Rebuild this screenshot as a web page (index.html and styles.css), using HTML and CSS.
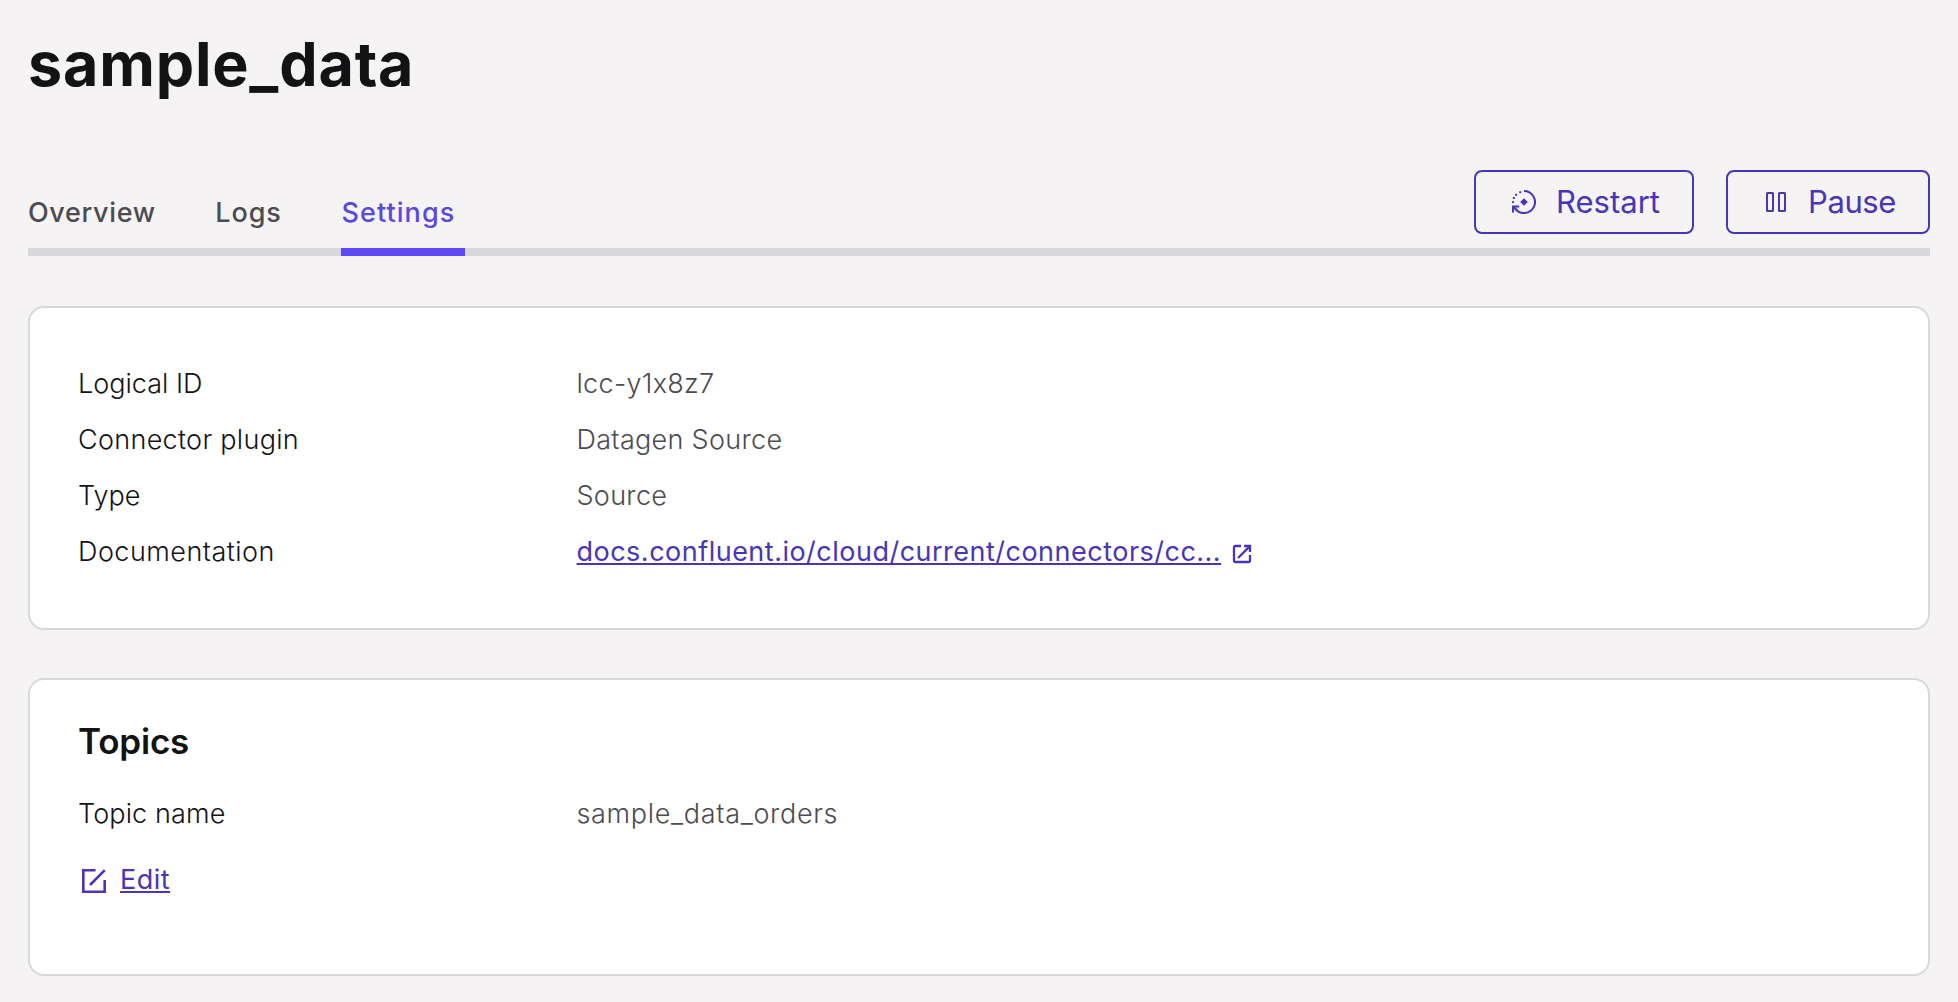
FILE: index.html
```
<!DOCTYPE html>
<html lang="en">
<head>
<meta charset="utf-8">
<title>sample_data</title>
<link rel="stylesheet" href="styles.css">
</head>
<body>
<main class="page">
  <h1 class="title">sample_data</h1>

  <div class="toolbar">
    <nav class="tabs">
      <a class="tab tab-overview">Overview</a>
      <a class="tab tab-logs">Logs</a>
      <a class="tab tab-settings active">Settings</a>
    </nav>
    <div class="actions">
      <button class="button">
        <svg class="icon" viewBox="0 0 24 24" width="24" height="24" fill="none" stroke="currentColor" stroke-width="2">
          <path d="M12 1A11 11 0 1 1 3.2 18.6"/>
          <path d="M1 22.5V16.4H7.2M1.2 16.6L5.4 20.8"/>
          <path d="M12 8.2L15.8 12L12 15.8L8.2 12Z" fill="currentColor" stroke="none"/>
          <path d="M7.2 1.2h2v2h-2zM3.2 3.8h2v2h-2zM.8 7h2v2h-2zM0 11.2h2v1.8h-2z" fill="currentColor" stroke="none"/>
        </svg>
        <span>Restart</span>
      </button>
      <button class="button button-pause">
        <svg class="icon" viewBox="0 0 24 24" width="24" height="24" fill="none" stroke="currentColor" stroke-width="2">
          <rect x="3" y="3" width="6" height="18" rx=".6"/>
          <rect x="15" y="3" width="6" height="18" rx=".6"/>
        </svg>
        <span>Pause</span>
      </button>
    </div>
  </div>

  <section class="card">
    <dl class="details">
      <dt class="t-flat">Logical ID</dt><dd>lcc-y1x8z7</dd>
      <dt>Connector plugin</dt><dd>Datagen Source</dd>
      <dt class="t-flat">Type</dt><dd>Source</dd>
      <dt class="t-mid">Documentation</dt>
      <dd class="doc">
        <a class="link">docs.confluent.io/cloud/current/connectors/cc...</a>
        <svg class="external" viewBox="0 0 20 20" width="20" height="20" fill="none" stroke="currentColor" stroke-width="2.3">
          <path d="M9 2H3.2Q2 2 2 3.2V16.8Q2 18 3.2 18H16.8Q18 18 18 16.8V11"/>
          <path d="M6 14L17.4 2.6M12 2H18V8"/>
        </svg>
      </dd>
    </dl>
  </section>

  <section class="card card-topics">
    <h2 class="heading">Topics</h2>
    <dl class="details">
      <dt class="t-name">Topic name</dt><dd class="t-wide">sample_data_orders</dd>
    </dl>
    <div class="edit">
      <svg class="icon" viewBox="0 0 24 24" width="24" height="24" fill="none" stroke="currentColor" stroke-width="2.6">
        <path d="M13.5 1.3H1.3V22.7H22.7V11"/>
        <path d="M8 16L22.8 1.2"/>
      </svg>
      <a class="link">Edit</a>
    </div>
  </section>
</main>
</body>
</html>
```
FILE: styles.css
```
* {
  box-sizing: border-box;
}

body {
  margin: 0;
  background: #f5f3f4;
  color: #131316;
  font: 300 27px/56px Inter, "Liberation Sans", sans-serif;
  font-feature-settings: "calt" 0;
}

.page {
  padding: 24px 28px 26px;
}

.title {
  margin: 0;
  font-size: 61px;
  line-height: 80px;
  font-weight: 700;
  letter-spacing: 0.8px;
}

.toolbar {
  display: flex;
  justify-content: space-between;
  height: 86px;
  margin: 66px 0 50px;
  background: linear-gradient(#d8d7db, #d8d7db) bottom / 100% 8px no-repeat;
}

.tabs {
  display: flex;
  align-items: flex-end;
  gap: 49.6px;
}

.tab {
  height: 64px;
  padding: 1px 10px 0 0;
  border-bottom: 8px solid transparent;
  color: #4c4b52;
  font-weight: 500;
  line-height: 40px;
}

.tab-overview {
  letter-spacing: 0.65px;
}

.tab-logs {
  letter-spacing: 0.9px;
}

.tab-settings {
  width: 124px;
  letter-spacing: 1.1px;
}

.tab.active {
  color: #5b48e0;
  border-color: #5d48f3;
}

.actions {
  display: flex;
  gap: 32px;
}

.button {
  display: flex;
  align-items: center;
  gap: 20px;
  width: 220px;
  height: 64px;
  padding: 0 0 0 36px;
  border: 2px solid #4835b8;
  border-radius: 8px;
  background: none;
  color: #4835b8;
  font: 400 31px/60px Inter, "Liberation Sans", sans-serif;
}

.button-pause {
  width: 204px;
  letter-spacing: -0.4px;
}

.icon,
.external {
  flex: none;
}

.card {
  padding: 48px;
  border: 2px solid #d8d8db;
  border-radius: 16px;
  background: #fff;
}

.card-topics {
  margin-top: 48px;
  padding: 39px 48px 66px;
}

.details {
  display: grid;
  grid-template-columns: 498.5px 1fr;
  margin: 0;
  letter-spacing: 0.3px;
}

.details dd {
  margin: 0;
  color: #4c4b52;
}

.details .t-flat {
  letter-spacing: 0;
}

.details .t-name {
  letter-spacing: 0.12px;
}

.details .t-mid {
  letter-spacing: 0.47px;
}

.details .t-wide {
  letter-spacing: 0.67px;
}

.details .doc {
  display: flex;
  align-items: center;
  gap: 11px;
  color: #4835b8;
}

.external {
  margin-top: 3px;
}

.link {
  color: #4835b8;
  font-weight: 400;
  letter-spacing: 0.49px;
  text-decoration: underline;
  text-decoration-thickness: 2px;
  text-underline-offset: 2px;
  text-decoration-skip-ink: none;
}

.heading {
  margin: 0 0 23px;
  font-size: 35px;
  line-height: 44px;
  font-weight: 600;
  letter-spacing: -0.2px;
}

.edit {
  display: flex;
  align-items: center;
  gap: 14px;
  margin-top: 10px;
  padding-left: 4px;
  color: #4835b8;
}

.edit .icon {
  margin-top: 2px;
}
```
